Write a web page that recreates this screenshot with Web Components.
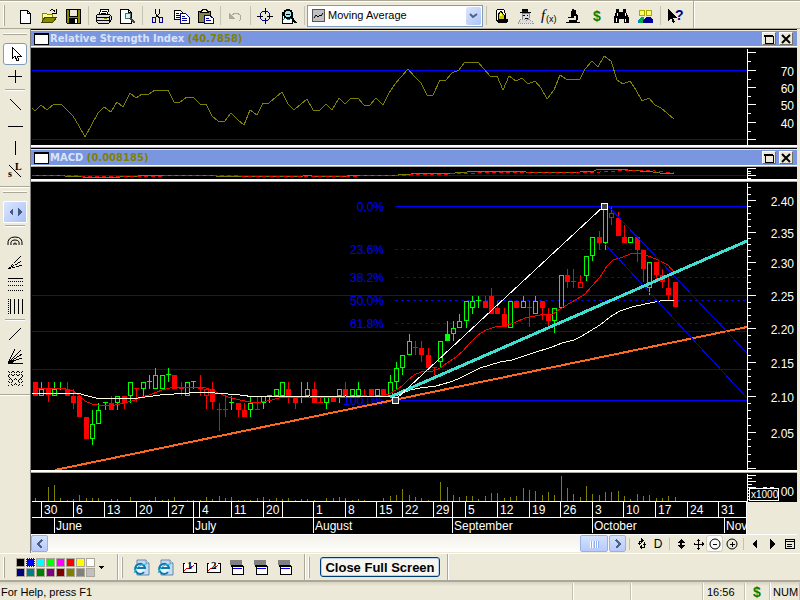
<!DOCTYPE html>
<html lang="en">
<head>
<meta charset="utf-8">
<title>Chart workspace</title>
<style>
    html, body { margin: 0; height: 100%; }
    body {
        background: #ece9d8;
        color: #000;
        font-family: "Liberation Sans", Arial, sans-serif;
        font-size: 11px;
        overflow: hidden;
    }
</style>
</head>
<body>
<trading-app></trading-app>

<script>
// ---------- icons (16 x 16 grid) ----------
const ICONS = {
    'new': '<path d="M3 2h7l3 3v10H3z" fill="#fff" stroke="#000"/><path d="M10 2v3h3" fill="none" stroke="#000"/>',
    open: '<path d="M1 14V5h4l1 1h5v3H5z" fill="#ff9" stroke="#880"/><path d="M1 14l3-5h12l-4 5z" fill="#880" stroke="#440"/><path d="M9 3q3-3 5 1M15 1v4h-4" fill="none" stroke="#000"/>',
    save: '<path d="M1 1h14v14H2l-1-1z" fill="#880" stroke="#000"/><path d="M4 1h8v7H4z" fill="#ece9d8" stroke="#000"/><path d="M4 10h9v5H4z" fill="#000"/><path d="M10 11h2v4h-2z" fill="#fff"/>',
    print: '<path d="M4 7l2-6h8l-2 6" fill="#fff" stroke="#000"/><path d="M7 3h5M6 5h5" stroke="#000"/><path d="M1 8l2-2h11l2 2v4l-2 3H3l-2-2z" fill="#ddd" stroke="#000"/><path d="M1 9h13l2-2M2 12h12M14 9v6" fill="none" stroke="#000"/><path d="M9 10h3v1H9z" fill="#880"/>',
    preview: '<path d="M1 1h8l3 3v11H1z" fill="#fff" stroke="#000"/><path d="M9 1v3h3" fill="none" stroke="#000"/><circle cx="9" cy="8" r="3" fill="#bff" stroke="#666"/><path d="M11 10l5 5" stroke="#444" stroke-width="2"/>',
    cut: '<path d="M6 1l1 5 3 4M11 1l-1 5-4 4" fill="none" stroke="#000"/><ellipse cx="5" cy="12" rx="2" ry="3" fill="none" stroke="#008"/><ellipse cx="12" cy="12" rx="2" ry="3" fill="none" stroke="#008"/>',
    copy: '<path d="M1 2h6l3 3v6H1z" fill="#fff" stroke="#000"/><path d="M3 5h3M3 7h5M3 9h5" stroke="#000"/><path d="M7 5h5l4 4v6H7z" fill="#fff" stroke="#008"/><path d="M9 8h3M9 10h5M9 12h5" stroke="#008"/>',
    paste: '<path d="M1 3h12v11H1z" fill="#884" stroke="#000"/><path d="M4 4l2-3h3l2 3z" fill="#ff8" stroke="#000"/><path d="M7 7h5l4 3v5H7z" fill="#fff" stroke="#008"/><path d="M9 10h3M9 12h5" stroke="#008"/>',
    undo: '<path d="M4 8q5-5 9-1 2 3-1 6" fill="none" stroke="#aca899" stroke-width="1"/><path d="M2 5v6h6z" fill="#aca899"/>',
    target: '<circle cx="8" cy="8" r="5" fill="none" stroke="#008"/><path d="M8 0v6M8 10v6M0 8h6M10 8h6" stroke="#000"/>',
    search: '<path d="M1 4h10v11H1z" fill="#fff" stroke="#000"/><path d="M2 12l3-3 2 3 3-2" fill="none" stroke="#088"/><circle cx="7" cy="6" r="4" fill="#9ee" stroke="#000" stroke-width="2"/><path d="M5 6h4" stroke="#000"/><path d="M10 9l5 6" stroke="#000" stroke-width="2"/>',
    expert: '<rect x="3" y="1" width="9" height="13" rx="4" fill="#fff" stroke="#000"/><path d="M5 11V7l3-4 3 4v4z" fill="#cc0" stroke="#000"/><path d="M7 5h2v3H7z" fill="#ff6"/><path d="M3 12h6l2-2 4 1v3l-3 1H5z" fill="#000"/>',
    advisor: '<path d="M5 1h6v3h3v1H3V4h2z" fill="#000"/><path d="M5 3h6v1H5z" fill="#00a"/><path d="M5 5h7v5l-2 2H7l-2-2z" fill="#ddd" stroke="#888"/><path d="M6 7h2M10 7h1M8 10h3" stroke="#000"/><path d="M1 15l2-3 4-1 2 2 2-2 4 2 1 2z" fill="#ddd" stroke="#999" stroke-dasharray="1 1"/>',
    scope: '<path d="M7 1l4 1v3l-2 4H6V6z" fill="#000"/><path d="M9 5q6 4 2 8" fill="none" stroke="#000" stroke-width="2"/><path d="M3 9h6v1H3zM4 12h8v2H4zM1 14h14v1H1z" fill="#000"/>',
    find: '<path d="M3 1h3v3h4V1h3v3l3 6v5h-5v-4H6v4H1v-5l2-6z" fill="#000"/><path d="M4 5v3M12 5v3M3 10v4M12 11v3" stroke="#fff"/>',
    people: '<circle cx="5" cy="5" r="3" fill="#ff6" stroke="#aa0"/><circle cx="12" cy="5" r="3" fill="#ff6" stroke="#aa0"/><path d="M1 15v-3l3-3h3l2 6z" fill="#0a4"/><path d="M1 15v-3l2-1v4z" fill="#08c"/><path d="M6 15v-3l3-3h4l3 3v3z" fill="#009"/>',
    arrow: '<path d="M5 1v12l3-3 2 5 2-1-2-4h4z" fill="#fff" stroke="#000"/>',
    plus: '<path d="M8 2v13M1 8h14" stroke="#000"/>',
    trend: '<path d="M3 3l11 11" stroke="#000"/>',
    hline: '<path d="M1 8h15" stroke="#000"/>',
    vline: '<path d="M8 1v14" stroke="#000"/>',
    scroll: '<path d="M6 4v8L2 8zM11 4v8l4-4z" fill="#44577f"/>',
    arcs: '<g shape-rendering="auto" fill="none" stroke="#000"><path d="M1 13q-1-8 7-8t7 8M4 13q-1-5 4-5t4 5M7 13q-1-2 1-2t1 2"/></g>',
    fan: '<path d="M1 15L14 2M1 15L15 7M1 15l14-4" stroke="#000" stroke-dasharray="3 1"/>',
    rows: '<path d="M1 2h15" stroke="#000"/><path d="M1 5h15M1 9h15M1 14h15" stroke="#000" stroke-dasharray="1 1"/>',
    cols: '<path d="M1 1v15" stroke="#000" stroke-dasharray="1 1"/><path d="M3 1v15M7 1v15M11 1v15M15 1v15" stroke="#000"/>',
    ray: '<path d="M2 14L14 2" stroke="#000"/>',
    gann: '<path d="M1 15L8 1M1 15L14 2M1 15L15 6M1 15l14-5M1 15h15" stroke="#000"/><path d="M1 16v-3l2-1 3 2v2z" fill="#000"/>',
    hatch: '<path d="M1 1l15 15M6 1l10 10M1 6l10 10M11 1l5 5M1 11l5 5M16 1L1 16M11 1L1 11M16 6L6 16M6 1L1 6M16 11l-5 5" stroke="#000" stroke-dasharray="1 1"/>',
    page: '<g shape-rendering="auto"><path d="M4 1h9l3 3v12H4z" fill="#c8dcf4" stroke="#68a"/><path d="M13 1v3h3" fill="#fff" stroke="#68a"/><path d="M12 9a5 5 0 1 0-1 4" fill="#e8f6ff" stroke="#17a" stroke-width="2"/><path d="M3 9h10" stroke="#17a" stroke-width="2"/><path d="M1 14Q4 5 14 5" fill="none" stroke="#3bd"/></g>',
    win: '<path d="M1 1h12v5H1z" fill="#808080"/><path d="M3 7h11v8H3z" fill="#fff" stroke="#000"/><path d="M2 7h12" stroke="#000" stroke-width="2"/><path d="M4 9h9" stroke="#00f"/>',
    refresh: '<path d="M6 9V5h2M11 6v5H9" fill="none" stroke="#000" stroke-width="1"/><path d="M8 2l3 3-3 2zM9 8l-3 3 3 3zM4 8h4L6 6zM9 8h4l-2 2z" fill="#000"/>',
    updown: '<path d="M8 3l4 4H9v2h3l-4 4-4-4h3V7H4z" fill="#000"/>',
    move: '<path d="M8 4v9M4 8h9" stroke="#000"/><path d="M8 3l2 2H6zM8 14l2-2H6zM3 8l2-2v4zM14 8l-2-2v4z" fill="#000"/>',
    zoomout: '<circle shape-rendering="auto" cx="8" cy="8" r="5" fill="none" stroke="#000"/><path d="M6 8h4" stroke="#000"/>',
    zoomin: '<circle shape-rendering="auto" cx="8" cy="8" r="5" fill="none" stroke="#000"/><path d="M6 8h5M8 6v5" stroke="#000"/>',
    left: '<path d="M10 3v10L5 8z" fill="#000"/>',
    right: '<path d="M6 3v10l5-5z" fill="#000"/>',
    list: '<path d="M4 3h9v9H4z" fill="none" stroke="#000"/><path d="M4 5h9M6 8h5M6 10h5" stroke="#000"/>',
    sleft: '<path d="M10 4L6 8l4 4" fill="none" stroke="#4d6185" stroke-width="2"/>',
    sright: '<path d="M6 4l4 4-4 4" fill="none" stroke="#4d6185" stroke-width="2"/>',
    grip: '<path d="M4 5v7M6 5v7M9 5v7M11 5v7" stroke="#fff"/><path d="M5 5v7M8 5v7M10 5v7M12 5v7" stroke="#8cb0f8"/>',
    max: '<path d="M4 5h8v7H4z" fill="none" stroke="#000"/><path d="M3 5h9" stroke="#000" stroke-width="2"/>',
    close: '<path shape-rendering="auto" d="M4 4l8 8M12 4l-8 8" stroke="#000" stroke-width="2"/>',
    dollar: '<text x="8" y="13" text-anchor="middle" font-size="14" font-weight="bold" fill="#008000">$</text>',
    fx: '<text x="0" y="12" font-family="Liberation Serif, serif" font-style="italic" font-size="15">f</text><text x="5" y="14" font-size="9">(x)</text>',
    help: '<path d="M1 1v12l3-3 2 5 2-1-2-4h4z" fill="#000"/><text x="8" y="12" font-size="14" font-weight="bold" fill="#000080">?</text>',
    sl: '<path d="M2 3l12 12" stroke="#000"/><text x="8" y="8" font-family="Liberation Serif, serif" font-size="10" font-weight="bold">L</text><text x="1" y="15" font-family="Liberation Serif, serif" font-size="10" font-weight="bold">s</text>',
    one: '<path d="M4 4H2v9h13V4h-2" fill="#fff" stroke="#000"/><path d="M3 12l3-3 2 1 5-4" fill="none" stroke="#d00"/><text x="6" y="10" font-family="Liberation Serif, serif" font-size="11" font-weight="bold">1</text>',
    two: '<path d="M4 4H2v9h13V4h-2" fill="#fff" stroke="#000"/><path d="M3 12l3-3 2 1 5-4" fill="none" stroke="#d00"/><text x="6" y="10" font-family="Liberation Serif, serif" font-size="11" font-weight="bold">2</text>',
    daily: '<text x="8" y="12" text-anchor="middle" font-size="12">D</text>'
};

const svgIcon = name =>
    `<svg viewBox="0 0 16 16" width="16" height="16" shape-rendering="crispEdges" aria-hidden="true">${ICONS[name]}</svg>`;

// ---------- market data, one entry per session ----------
const dayX = i => 35 + Math.round(i * 19 / 3);

// kind high top bottom low; R/G filled, r/g hollow, x/o flat close (red/green)
const CANDLES = `R 382 382 396 396,g 382 389 396 396,R 382 389 395 402,g 382 389 396 396,o 382 388 388 390,R 382 389 396 396,
R 389 396 403 409,R 396 396 417 417,R 417 417 439 439,g 410 424 439 445,g 403 410 424 424,o 402 402 402 410,R 396 403 410 410,
g 396 396 403 410,R 396 396 403 409,g 382 382 396 403,x 388 388 388 402,g 382 382 389 396,o 375 381 381 389,g 368 375 389 389,
g 375 375 389 389,o 368 374 374 382,R 375 375 389 389,x 382 388 388 396,g 382 382 396 396,o 381 381 381 389,x 375 388 388 396,
r 389 389 396 409,R 382 389 402 409,x 403 409 409 431,x 396 409 409 417,o 396 402 402 410,R 403 403 410 417,R 403 410 417 417,
g 396 403 410 417,x 396 409 409 410,g 396 396 403 409,o 395 395 395 403,g 389 389 396 396,g 382 382 396 396,R 382 389 396 403,
R 396 396 403 409,o 382 396 396 403,g 382 389 396 396,R 382 389 403 403,x 396 402 402 403,g 396 396 403 409,R 396 396 402 402,
g 389 389 396 403,R 382 389 396 396,g 389 389 396 396,g 382 389 396 396,x 389 395 395 396,R 389 389 396 396,g 389 389 396 396,
R 389 389 396 396,g 375 382 396 396,g 362 368 382 389,g 355 355 368 375,g 334 341 355 355,x 341 347 347 355,R 341 348 355 362,
R 348 355 368 368,x 367 367 367 375,g 341 341 362 367,G 321 334 341 341,g 321 328 334 341,g 314 321 328 328,g 301 301 321 328,
g 296 301 308 314,o 296 300 300 308,R 296 301 308 308,R 288 296 314 314,R 301 308 314 314,R 308 314 327 327,g 301 301 328 328,
R 301 301 308 308,g 296 301 308 308,x 301 307 307 327,g 296 301 314 314,R 301 301 308 320,R 308 314 321 327,g 308 308 321 333,
g 275 275 308 308,R 269 275 282 288,x 269 281 281 288,r 275 282 288 288,g 256 256 276 281,g 237 237 256 261,R 231 237 243 250,
g 207 207 243 250,r 207 213 218 225,R 212 218 236 236,R 225 237 243 243,g 237 237 243 243,R 237 237 250 262,R 250 250 269 282,
g 262 262 288 295,R 262 262 275 281,R 269 275 282 288,R 275 288 295 301,R 282 282 307 307`.split(',').map(s => {
    const [kind, ...v] = s.trim().split(' ');
    return [kind, ...v.map(Number)];
});

const VOLUME = [3, 0, 14, 16, 3, 1, 2, 6, 3, 3, 3, 0, 2, 2, 0, 4, 0, 0, 1, 4, 1, 2, 4, 0, 1, 1, 1, 4, 2, 5, 3, 4, 1, 1, 1,
    3, 4, 2, 3, 2, 3, 1, 2, 2, 1, 0, 3, 3, 4, 3, 1, 2, 1, 0, 0, 3, 5, 6, 12, 6, 4, 3, 1, 0, 19, 14, 6, 4, 5, 5, 2, 5, 8,
    8, 3, 4, 5, 13, 11, 10, 6, 9, 6, 25, 13, 7, 4, 15, 7, 6, 9, 9, 10, 5, 2, 7, 5, 6, 3, 3, 5, 4];

const RSI = '32,108 35,111 41,105 47,110 54,104 61,104 73,116 79,126 85,137 98,113 104,107 111,112 117,102 123,107 130,93 136,98 142,94 149,94 155,90 168,90 174,102 180,102 187,97 193,97 200,104 206,104 212,116 218,121 225,121 231,113 238,120 244,125 250,110 257,115 263,103 269,103 276,97 282,92 288,104 294,110 301,104 307,99 313,110 320,110 326,104 332,110 339,98 345,104 351,98 358,98 364,105 370,105 376,98 383,105 389,93 395,84 401,77 408,69 414,76 421,83 427,95 433,95 440,80 446,80 452,73 459,70 465,62 478,62 484,69 490,76 497,76 503,90 509,76 516,81 522,78 528,84 535,81 541,88 547,99 554,90 560,75 566,79 580,79 585,69 592,61 598,67 604,56 611,61 617,80 623,84 630,81 636,90 642,101 649,98 655,105 661,108 674,119';
const MACD = '32,175 64,175 65,176 82,176 83,177 120,177 121,176 138,176 139,175 215,175 216,176 303,176 305,175 311,175 312,176 347,176 349,175 398,175 399,174 411,174 412,173 455,173 456,172 467,172 468,171 525,171 526,172 580,172 582,171 594,171 596,170 600,169 626,169 628,170 640,171 653,172 660,173 674,174';
const SIGNAL = '32,175 78,175 80,176 163,176 164,175 237,175 240,176 360,176 361,175 410,175 412,174 448,174 450,173 476,173 478,172 600,172 602,171 616,171 618,170 650,170 655,171 664,172 674,173';
const MA_FAST = '32,388 66,389 73,391 79,395 85,401 92,404 98,405 115,405 125,403 135,400 142,397 152,394 162,390 170,388 200,387 206,388 216,392 228,397 240,400 250,402 262,402 272,400 282,397 310,397 340,398 380,396 389,394 396,390 402,386 408,380 414,375 421,372 433,371 440,368 447,363 456,357 463,351 470,343 478,335 486,330 495,327 504,326 514,323 525,318 540,315 553,314 560,309 570,303 577,299 585,294 592,286 600,277 607,266 613,260 623,257 630,254 638,253 648,256 656,259 668,265 674,272';
const MA_SLOW = '32,393 78,393 84,395 96,398 138,398 160,395 174,394 205,392 215,393 240,395 255,397 310,396 325,397 345,396 390,397 398,395 410,390 420,388 436,386 450,382 458,379 468,374 480,368 500,362 512,360 530,354 552,347 562,343 574,340 582,336 590,331 600,325 610,317 620,311 632,307 645,304 660,301 674,300';

const DAYS = [[41, '30'], [73, '6'], [104, '13'], [136, '20'], [168, '27'], [193, ''], [199, '4'], [231, '11'], [263, '20'],
    [282, ''], [313, '1'], [345, '8'], [376, '15'], [402, '22'], [433, '29'], [452, ''], [465, '5'], [497, '12'], [529, '19'],
    [560, '26'], [592, '3'], [623, '10'], [655, '17'], [687, '24'], [718, '31']];
const MONTHS = [[54, 'June'], [193, 'July'], [313, 'August'], [452, 'September'], [592, 'October'], [724, 'Nov']];

// ---------- drawing helpers ----------
const rect = (x, y, w, h, fill) => `<rect x="${x}" y="${y}" width="${w}" height="${h}" fill="${fill}"/>`;
const poly = (pts, color, extra = '') => `<polyline points="${pts}" fill="none" stroke="${color}" ${extra}/>`;
const level = (y, x = 32) => rect(x, y, '100%', 1, '#00f');

function candle([kind, hi, top, bot, lo], i) {
    const x = dayX(i);
    const color = 'Rrx'.includes(kind) ? '#f00' : '#0f0';
    let out = '';
    if (kind === 'x' || kind === 'o') {
        out += rect(x, hi, 1, Math.max(1, lo - hi), color) + rect(x - 2, top, 5, 1, color);
    } else if (kind === 'R' || kind === 'G') {
        out += rect(x, hi, 1, lo - hi, color) + rect(x - 2, top, 5, bot - top, color);
    } else {
        out += rect(x, hi, 1, top - hi, color) + rect(x, bot, 1, lo - bot, color);
        out += rect(x - 2, top, 5, 1, color) + rect(x - 2, bot - 1, 5, 1, color);
        out += rect(x - 2, top, 1, bot - top, color) + rect(x + 2, top, 1, bot - top, color);
    }
    return out;
}

function axisTicks(majors, minorCount) {
    let out = '';
    majors.forEach((y, i) => {
        out += rect(748, y, 8, 1, '#fff');
        const next = majors[i + 1];
        for (let k = 1; next && k <= minorCount; k++) {
            out += rect(748, Math.round(y + (next - y) * k / (minorCount + 1)), 3, 1, '#fff');
        }
    });
    return out;
}
const axisLabel = (y, s) => `<text x="794" y="${y}" text-anchor="end" fill="#fff">${s}</text>`;

// ---------- chrome ----------
class ToolButton extends HTMLElement {
    connectedCallback() {
        const icon = this.getAttribute('icon');
        this.attachShadow({ mode: 'open' }).innerHTML = `
            <style>
                :host { display: block; flex: none; width: 24px; height: 22px; }
                button {
                    box-sizing: border-box;
                    display: flex;
                    align-items: center;
                    justify-content: center;
                    width: 100%;
                    height: 100%;
                    padding: 0;
                    border: 1px solid transparent;
                    border-radius: 3px;
                    background: none;
                    font: inherit;
                }
                svg { display: block; flex: none; overflow: visible; }
                :host([look="pressed"]) button { background: #fff; border-color: #7f9db9; }
                :host([look="raised"]) button { background: #fafaf7; border-color: #d0cdbf; }
                :host([look="blue"]) button { background: linear-gradient(135deg, #dbe6ff, #a9c1f5); border-color: #fff; border-radius: 1px; }
                :host([look="scroll"]) button { background: linear-gradient(#d4e1ff, #b7cbf8); border-color: #98b1e4; border-radius: 2px; }
                :host([look="caption"]) button { background: #ece9d8; border-color: #fff #716f64 #716f64 #fff; border-radius: 0; }
            </style>
            <button type="button" aria-label="${this.getAttribute('label') || icon}">${svgIcon(icon)}</button>
        `;
    }
}

class ToolSep extends HTMLElement {
    connectedCallback() {
        this.attachShadow({ mode: 'open' }).innerHTML = `
            <style>
                :host { display: flex; flex: none; width: 6px; justify-content: center; align-self: stretch; }
                i { width: 1px; background: #c5c2b2; margin: 3px 0; }
                :host([flat]) { width: auto; height: 6px; align-items: center; }
                :host([flat]) i { width: 20px; height: 1px; margin: 0; background: #aca899; border-bottom: 1px solid #fff; }
            </style>
            <i></i>
        `;
    }
}

class IndicatorPicker extends HTMLElement {
    connectedCallback() {
        this.attachShadow({ mode: 'open' }).innerHTML = `
            <style>
                :host {
                    display: flex;
                    flex: none;
                    align-items: center;
                    box-sizing: border-box;
                    width: 176px;
                    height: 22px;
                    padding: 0 1px 0 4px;
                    gap: 3px;
                    background: #fff;
                    border: 1px solid #7f9db9;
                }
                .mark { width: 13px; height: 13px; background: #c0c0c0; border: 1px solid #555; box-sizing: border-box; }
                select {
                    flex: 1;
                    min-width: 0;
                    appearance: none;
                    padding: 0 0 2px;
                    border: 0;
                    background: none;
                    font: inherit;
                    color: #000;
                }
                .drop {
                    display: grid;
                    place-items: center;
                    width: 15px;
                    height: 18px;
                    border-radius: 2px;
                    background: linear-gradient(135deg, #dbe6ff, #aec4f7);
                }
                svg { display: block; }
            </style>
            <svg class="mark" viewBox="0 0 11 11"><path d="M1 8l2-3 2 2 2-2 1 1 2-3" fill="none" stroke="#000"/></svg>
            <select id="indicator" aria-label="Indicator">
                <option>Moving Average</option>
            </select>
            <span class="drop"><svg width="9" height="6" viewBox="0 0 9 6"><path d="M1 1l3 3 4-3" fill="none" stroke="#4d6185" stroke-width="2"/></svg></span>
        `;
    }
}

class TopBar extends HTMLElement {
    connectedCallback() {
        const b = names => names.split(' ').map(n => `<tool-button icon="${n}"></tool-button>`).join('');
        this.attachShadow({ mode: 'open' }).innerHTML = `
            <style>
                :host {
                    display: flex;
                    box-sizing: border-box;
                    height: 29px;
                    border-top: 1px solid #aca899;
                    border-bottom: 1px solid #aca899;
                    box-shadow: inset 0 1px #fff;
                }
                nav {
                    display: flex;
                    align-items: center;
                    padding: 2px 6px 0 9px;
                    border-right: 1px solid #aca899;
                    box-shadow: 1px 0 #fff;
                }
                .grip { width: 1px; height: 21px; margin: 0 6px 0 -6px; border-right: 1px solid #aca899; background: #fff; }
                .grip + * { margin-left: 2px; }
            </style>
            <nav aria-label="Main toolbar">
                <span class="grip"></span>
                ${b('new open save')}<tool-sep></tool-sep>
                ${b('print preview')}<tool-sep></tool-sep>
                ${b('cut copy paste')}<tool-sep></tool-sep>
                ${b('undo')}<tool-sep></tool-sep>
                ${b('target search')}<tool-sep></tool-sep>
                <indicator-picker></indicator-picker><tool-sep></tool-sep>
                ${b('expert advisor fx scope dollar find people')}<tool-sep></tool-sep>
                ${b('help')}
            </nav>
        `;
    }
}

class SideBar extends HTMLElement {
    connectedCallback() {
        const b = names => names.split(' ').map(n => `<tool-button icon="${n}"></tool-button>`).join('');
        this.attachShadow({ mode: 'open' }).innerHTML = `
            <style>
                :host { display: block; flex: none; width: 30px; }
                section {
                    display: flex;
                    flex-direction: column;
                    padding: 4px 3px 5px;
                    border-bottom: 1px solid #aca899;
                    box-shadow: 0 1px #fff;
                }
                section::before {
                    content: "";
                    height: 1px;
                    width: 24px;
                    margin-bottom: 8px;
                    background: #fff;
                    border-bottom: 1px solid #aca899;
                }
            </style>
            <section>
                <tool-button icon="arrow" look="pressed"></tool-button>${b('plus')}
                <tool-sep flat></tool-sep>
                ${b('trend hline vline sl')}
            </section>
            <section>
                <tool-button icon="scroll" look="blue"></tool-button>
                <tool-sep flat></tool-sep>
                ${b('arcs fan rows cols')}
                <tool-sep flat></tool-sep>
                ${b('ray gann hatch')}
            </section>
        `;
    }
}

// ---------- chart panes ----------
class ChartPane extends HTMLElement {
    connectedCallback() {
        this.attachShadow({ mode: 'open' }).innerHTML = `
            <style>
                :host {
                    display: flex;
                    align-items: flex-start;
                    box-sizing: content-box;
                    height: ${this.height};
                    border-bottom: 2px solid #fff;
                    box-shadow: 0 1px #aca899;
                    margin-bottom: 1px;
                    font-size: 12px;
                }
                svg { display: block; height: 100%; background: #000; }
                .plot { flex: 1; min-width: 0; }
                .axis { flex: none; width: 50px; }
                ${this.css || ''}
            </style>
            <svg class="plot" shape-rendering="crispEdges" role="img" aria-label="${this.label}"><g transform="translate(-31 -${this.top})">${this.plot()}</g></svg>
            <svg class="axis" shape-rendering="crispEdges"><g transform="translate(-747 -${this.top})">${this.axis()}</g></svg>
        `;
    }
}

class RsiPane extends ChartPane {
    label = 'RSI';
    height = '97px';
    top = 48;
    plot() { return level(70) + level(139) + poly(RSI, '#808000'); }
    axis() {
        return rect(747, 49, 1, 100, '#fff') + axisTicks([52, 70, 87, 104, 122, 139], 1)
            + axisLabel(76, 70) + axisLabel(93, 60) + axisLabel(110, 50) + axisLabel(128, 40);
    }
}

class MacdPane extends ChartPane {
    label = 'MACD';
    height = '12px';
    top = 167;
    plot() { return level(175) + poly(MACD, '#808000') + poly(SIGNAL, '#f00', 'stroke-dasharray="4 3"'); }
    axis() {
        return rect(747, 168, 1, 12, '#fff') + rect(748, 168, 8, 1, '#fff') + rect(748, 171, 3, 1, '#fff')
            + rect(748, 173, 3, 1, '#fff') + rect(748, 175, 8, 1, '#fff') + rect(748, 178, 3, 1, '#fff');
    }
}

class PricePane extends ChartPane {
    label = 'Price';
    height = 'auto';
    top = 182;
    css = ':host { flex: 1; min-height: 0; align-items: stretch; } svg { height: auto; }';
    plot() {
        const fib = [[206, '0.0%'], [249, '23.6%'], [277, '38.2%'], [300, '50.0%'], [323, '61.8%'], [400, '100.0%']];
        const handle = (x, y) => `<rect x="${x - 3}" y="${y - 3}" width="7" height="7" fill="#fff"/><rect x="${x - 2}" y="${y - 2}" width="5" height="5" fill="#444"/>`;
        return [295, 331, 369].map(y => level(y)).join('')
            + fib.map(([y, s]) => `<text x="384" y="${y + 5}" text-anchor="end" fill="#00f">${s}</text>`).join('')
            + level(206, 395) + level(400, 395)
            + fib.slice(1, 5).map(([y]) => `<line x1="395" x2="800" y1="${y}" y2="${y}" stroke="#00f" stroke-dasharray="3 3"/>`).join('')
            + CANDLES.map(candle).join('')
            + poly(MA_FAST, '#f00') + poly(MA_SLOW, '#ffffe0')
            + poly('55,470 747,327', '#ff6820', 'stroke-width="2"')
            + poly('608,206 747,353', '#00f') + poly('604,243 747,398', '#00f')
            + poly('390,397 747,241', '#40e0d0', 'stroke-width="3"')
            + poly('395,400 604,206', '#fff')
            + handle(395, 400) + handle(604, 206);
    }
    axis() {
        const majors = [200, 232, 262, 295, 328, 362, 396, 432, 468];
        return rect(747, 183, 1, '100%', '#fff') + rect(748, 187, 3, 1, '#fff') + rect(748, 194, 3, 1, '#fff')
            + axisTicks(majors, 4)
            + majors.slice(0, 8).map((y, i) => axisLabel(y + 6, (2.4 - i * 0.05).toFixed(2))).join('');
    }
}

class VolumePane extends ChartPane {
    label = 'Volume and dates';
    height = '61px';
    top = 473;
    css = ':host { border-bottom-width: 1px; box-shadow: none; margin: 0; border-color: #fff; } .axis { height: 29px; }';
    plot() {
        const row = y => rect(32, y, '100%', 1, '#fff');
        return VOLUME.map((h, i) => rect(dayX(i), 501 - h, 1, h, '#808000')).join('')
            + row(501) + row(517) + rect(746, 501, 1, 33, '#fff')
            + DAYS.map(([x, s]) => rect(x, 501, 1, 16, '#fff') + `<text x="${x + 3}" y="514" fill="#fff">${s}</text>`).join('')
            + MONTHS.map(([x, s]) => rect(x, 517, 1, 16, '#fff') + `<text x="${x + 2}" y="530" fill="#fff">${s}</text>`).join('');
    }
    axis() {
        let ticks = '';
        for (let y = 475; y < 501; y += 3) ticks += rect(748, y, y % 2 ? 8 : 4, 1, '#fff');
        return rect(747, 474, 1, 29, '#fff') + ticks + axisLabel(496, '00')
            + rect(763, 487, 4, 1, '#fff') + rect(770, 487, 4, 1, '#fff')
            + `<rect x="749" y="488" width="29" height="12" fill="#000" stroke="#fff"/>`
            + `<text x="751" y="498" font-size="10" fill="#fff">x1000</text>`;
    }
}

class ChartWindow extends HTMLElement {
    connectedCallback() {
        this.attachShadow({ mode: 'open' }).innerHTML = `
            <style>
                :host { display: block; }
                header {
                    display: flex;
                    align-items: center;
                    gap: 3px;
                    height: 15px;
                    padding: 0 4px 0 3px;
                    background: #7b96e0;
                    border-top: 1px solid #ece9d8;
                    border-bottom: 1px solid #fff;
                    box-shadow: 0 -1px #000, 0 1px #aca899;
                    margin: 1px 0;
                    font: bold 10px "DejaVu Sans", Verdana, sans-serif;
                    color: #d8e4f8;
                }
                .mark { box-sizing: border-box; width: 15px; height: 12px; margin-right: -2px; background: #fff; border: 1px solid #000; border-top-width: 2px; }
                h2 { flex: 1; margin: 0; font: inherit; white-space: nowrap; }
                b { color: #808000; }
                tool-button { width: 14px; height: 13px; }
            </style>
            <header>
                <span class="mark"></span>
                <h2>${this.getAttribute('name')} <b>(${this.getAttribute('value')})</b></h2>
                <tool-button icon="max" look="caption" label="Maximize"></tool-button>
                <tool-button icon="close" look="caption" label="Close"></tool-button>
            </header>
            <slot></slot>
        `;
    }
}

class ScrollStrip extends HTMLElement {
    connectedCallback() {
        const b = names => names.split(' ').map(n => `<tool-button icon="${n}"></tool-button>`).join('');
        this.attachShadow({ mode: 'open' }).innerHTML = `
            <style>
                :host { display: flex; align-items: flex-start; height: 18px; }
                tool-button { width: 17px; height: 17px; }
                .track { display: flex; flex: 1; justify-content: flex-end; gap: 1px; height: 17px; background: linear-gradient(#f2f0ea, #fefefb); }
                .track > :first-child { margin-right: auto; }
                .track > .thumb { width: 28px; }
            </style>
            <div class="track">
                <tool-button icon="sleft" look="scroll"></tool-button>
                <tool-button class="thumb" icon="grip" look="scroll"></tool-button>
                <tool-button icon="sright" look="scroll"></tool-button>
            </div>
            <tool-sep></tool-sep>${b('refresh daily')}
            <tool-sep></tool-sep>${b('updown move')}<tool-button icon="zoomout" look="raised"></tool-button>${b('zoomin')}
            <tool-sep></tool-sep>${b('left right list')}
        `;
    }
}

class BottomBar extends HTMLElement {
    connectedCallback() {
        const colors = ['#000000', '#0000ff', '#00ffff', '#00ff00', '#ff00ff', '#ff0000', '#ffff00', '#ffffff',
            '#000080', '#008080', '#008000', '#800080', '#800000', '#808000', '#808080', '#c0c0c0'];
        this.attachShadow({ mode: 'open' }).innerHTML = `
            <style>
                :host {
                    display: flex;
                    box-sizing: border-box;
                    height: 28px;
                    border-top: 1px solid #fff;
                    border-bottom: 1px solid #aca899;
                }
                section {
                    display: flex;
                    align-items: center;
                    padding: 0 7px 0 3px;
                    border-right: 1px solid #aca899;
                    box-shadow: 1px 0 #fff;
                }
                section::before {
                    content: "";
                    width: 1px;
                    height: 21px;
                    margin-right: 11px;
                    background: #fff;
                    border-right: 1px solid #aca899;
                }
                .colors { padding-right: 6px; }
                .swatches { display: grid; grid-template-columns: repeat(8, 9px); gap: 1px; }
                .swatches button { width: 9px; height: 9px; padding: 0; border: 1px solid #aca899; }
                .swatches .on { border: 1px dotted #fff; }
                .more { box-sizing: border-box; width: 13px; height: 16px; padding: 0 4px; border: 0; background: none; }
                .colors { padding-right: 9px; }
                svg { display: block; }
                .icons { padding-right: 7px; }
                .icons::before { margin-right: 6px; }
                .full::before { margin-right: 10px; }
                .close {
                    height: 20px;
                    width: 120px;
                    padding: 0;
                    border: 1px solid #003c74;
                    border-radius: 3px;
                    background: #f6f5f0;
                    box-shadow: inset 0 0 0 1px #b8d0f0;
                    font: bold 13px "Liberation Sans", Arial, sans-serif;
                    color: #000;
                    white-space: nowrap;
                }
            </style>
            <section class="colors">
                <div class="swatches">
                    ${colors.map(c => `<button type="button" aria-label="${c}" class="${c === '#0000ff' ? 'on' : ''}" style="background:${c}"></button>`).join('')}
                </div>
                <button type="button" class="more" aria-label="More colors"><svg width="5" height="3" shape-rendering="crispEdges"><path d="M0 0h5L3 3H2z"/></svg></button>
            </section>
            <section class="icons">
                ${['page', 'page', 'one', 'two', 'win', 'win', 'win'].map(n => `<tool-button icon="${n}"></tool-button>`).join('')}
            </section>
            <section class="full">
                <button type="button" class="close">Close Full Screen</button>
            </section>
        `;
    }
}

class StatusBar extends HTMLElement {
    connectedCallback() {
        this.attachShadow({ mode: 'open' }).innerHTML = `
            <style>
                :host {
                    display: flex;
                    align-items: stretch;
                    box-sizing: border-box;
                    height: 19px;
                    padding: 1px 0 0 1px;
                    border-top: 1px solid #aca899;
                    background: linear-gradient(#d6d3c4, #ece9d8 4px);
                    line-height: 18px;
                    white-space: nowrap;
                }
                span { box-sizing: border-box; padding-left: 4px; border-right: 1px solid #c5c2b2; box-shadow: 1px 0 #fff; }
                .msg { flex: 1; padding: 0; }
                .s { width: 58px; }
                .m { width: 72px; }
                .time { width: 42px; }
                .cash { display: grid; place-items: center; width: 25px; padding: 0; }
                .num { width: 30px; padding: 0 0 0 3px; }
            </style>
            <span class="msg">For Help, press F1</span>
            <span class="s"></span>
            <span class="m"></span>
            <span class="time">16:56</span>
            <span class="cash">${svgIcon('dollar')}</span>
            <span class="num">NUM</span>
        `;
    }
}

class TradingApp extends HTMLElement {
    connectedCallback() {
        this.attachShadow({ mode: 'open' }).innerHTML = `
            <style>
                :host { display: flex; flex-direction: column; height: 100vh; }
                .middle { display: flex; flex: 1; min-height: 0; }
                main { display: flex; flex-direction: column; flex: 1; min-width: 0; padding-right: 3px; border-left: 1px solid #808080; }
            </style>
            <top-bar></top-bar>
            <div class="middle">
                <side-bar></side-bar>
                <main>
                    <chart-window name="Relative Strength Index" value="40.7858"><rsi-pane></rsi-pane></chart-window>
                    <chart-window name="MACD" value="0.008185"><macd-pane></macd-pane></chart-window>
                    <price-pane></price-pane>
                    <volume-pane></volume-pane>
                    <scroll-strip></scroll-strip>
                </main>
            </div>
            <bottom-bar></bottom-bar>
            <status-bar></status-bar>
        `;
    }
}

customElements.define('tool-button', ToolButton);
customElements.define('tool-sep', ToolSep);
customElements.define('indicator-picker', IndicatorPicker);
customElements.define('top-bar', TopBar);
customElements.define('side-bar', SideBar);
customElements.define('rsi-pane', RsiPane);
customElements.define('macd-pane', MacdPane);
customElements.define('price-pane', PricePane);
customElements.define('volume-pane', VolumePane);
customElements.define('chart-window', ChartWindow);
customElements.define('scroll-strip', ScrollStrip);
customElements.define('bottom-bar', BottomBar);
customElements.define('status-bar', StatusBar);
customElements.define('trading-app', TradingApp);
</script>
</body>
</html>
